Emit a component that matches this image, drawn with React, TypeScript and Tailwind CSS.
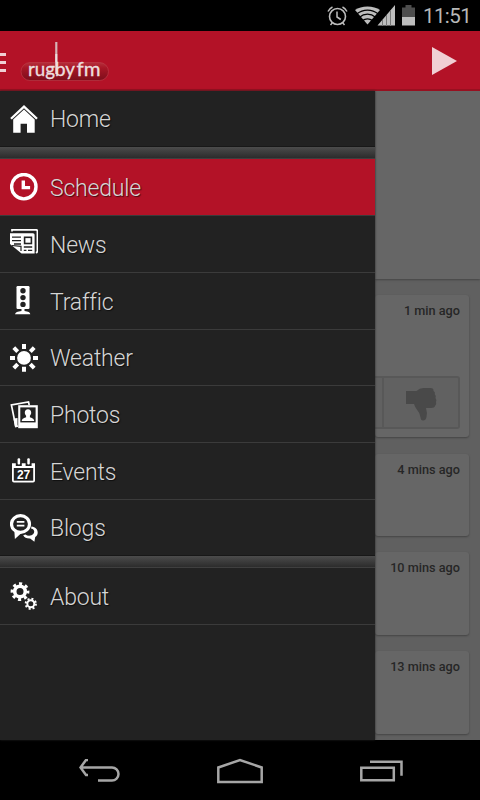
import type { ReactNode } from 'react'
import clsx from 'clsx'

const HomeIcon = () => (
  <svg width="28" height="28" viewBox="0 0 28 28" fill="#fff">
    <path d="M14 0 27.800 13l-1.600 1.600L14 3.200 1.800 14.600.2 13z" />
    <path d="M14 4.600 24.700 14.600V27.800H17V18.800h-6.400v9H3.200V14.600z" />
  </svg>
)

const ClockIcon = () => (
  <svg width="28" height="28" viewBox="0 0 28 28" fill="none" stroke="#fff">
    <circle cx="13.800" cy="13.700" r="12.200" strokeWidth="3.400" />
    <path d="M13.300 7.400v7.200h6.800" strokeWidth="3.400" />
  </svg>
)

const NewsIcon = () => (
  <svg className="-mt-[2px]" width="28" height="28" viewBox="0 0 28 28">
    <path d="M2 2.600V.8h24q1.400 0 1.400 1.400V22q0 1.400-1.600 1.800" fill="none" stroke="#fff" strokeWidth="1.700" />
    <path d="M0 4.200h23q1.600 0 1.600 1.600v18.800H11.500L0 15z" fill="#fff" />
    <path d="M2 8.200h9M2 11.600h9M4 15h7" stroke="#222" strokeWidth="1.300" />
    <path d="M2 16.500l9 .8v4.800" fill="none" stroke="#222" strokeWidth="1.200" />
    <rect x="14.600" y="8.300" width="6.800" height="6.200" fill="none" stroke="#222" strokeWidth="1.600" />
    <path d="M13.800 18h8.400M13.800 21.400h2.600M18 21.400h4.200" stroke="#222" strokeWidth="1.300" />
  </svg>
)

const TrafficIcon = () => (
  <svg className="-mt-px" width="28" height="29" viewBox="0 0 28 29">
    <rect x="6.500" y="0" width="13" height="23" rx="1.200" fill="#fff" />
    <path d="M11.500 22.500h3v2.400q5.600.5 5.800 3.300H5q.5-2.800 6.500-3.300z" fill="#fff" />
    <g fill="#222">
      <circle cx="13" cy="4.800" r="2.700" />
      <circle cx="13" cy="11.600" r="2.700" />
      <circle cx="13" cy="18.400" r="2.700" />
    </g>
  </svg>
)

const SunIcon = () => (
  <svg width="28" height="28" viewBox="0 0 28 28">
    <circle cx="14" cy="13.900" r="6.900" fill="#fff" />
    <path
      d="M14 0v5M14 22.800v5M0 13.900h5M23 13.900h5M3.800 3.700l3.900 3.900M20.300 20.200l3.900 3.900M24.200 3.700l-3.900 3.900M7.700 20.200l-3.900 3.900"
      stroke="#fff"
      strokeWidth="4"
    />
  </svg>
)

const PhotosIcon = () => (
  <svg className="mt-px" width="28" height="28" viewBox="0 0 28 28">
    <path d="M19.200 4 18.500 1 1.400 4 5.800 25.500 8 25" fill="none" stroke="#fff" strokeWidth="1.700" />
    <path d="M3.500 17.500 7.500 17v8.500l-2.500.6z" fill="#fff" />
    <rect x="8.200" y="4.200" width="19.600" height="23" fill="#fff" />
    <rect x="10.300" y="6.400" width="15.300" height="15" fill="#222" />
    <path
      d="M18 8.300c2 0 3.200 1.300 3.200 3.200 0 1.700-.8 2.600-1.300 3.300v1.400c1.600.9 4.200 1 4.300 3.800H11.800c.1-2.800 2.700-2.900 4.300-3.800v-1.400c-.5-.7-1.300-1.600-1.300-3.300 0-1.900 1.200-3.200 3.200-3.200z"
      fill="#fff"
    />
  </svg>
)

const CalendarIcon = () => (
  <svg width="28" height="28" viewBox="0 0 28 28">
    <path d="M2 6.200h3.800v2.800h6V6.200h3.800v2.800h6V6.200H25V23.500q0 2-2 2H4q-2 0-2-2z" fill="#fff" />
    <rect x="7.600" y="1.200" width="2.500" height="6.200" rx="1" fill="#fff" />
    <rect x="17.300" y="1.200" width="2.500" height="6.200" rx="1" fill="#fff" />
    <rect x="3.800" y="11" width="19.400" height="12.700" fill="#222" />
    <text x="13.600" y="21.800" textAnchor="middle" fontSize="12" fontWeight="700" fontFamily="Liberation Sans, sans-serif" fill="#fff">
      27
    </text>
  </svg>
)

const ChatIcon = () => (
  <svg width="28" height="28" viewBox="0 0 28 28">
    <path
      d="M21.500 12.500c3.800.4 6.200 2.900 6.200 5.900 0 2-.9 3.600-2.500 4.700l-.8 4.700-4.300-3.200c-3.300.2-5.700-.9-6.900-3.300l2.300-.7c1.600 1.300 4 1.500 6 .7 2.500-1 3.300-3.300 2.300-5-.6-1-1.500-1.500-2.800-1.700z"
      fill="#fff"
    />
    <path d="M4.300 16.500 4.900 25l6.600-6z" fill="#fff" />
    <ellipse cx="10.500" cy="10" rx="9" ry="8.400" fill="#222" stroke="#fff" strokeWidth="3.200" />
    <path d="M6.800 7.800h7.600M6.800 11.600h7.600" stroke="#fff" strokeWidth="1.700" />
  </svg>
)

const GearsIcon = () => (
  <svg width="28" height="28" viewBox="0 0 28 28" fill="none" stroke="#fff">
    <circle cx="10" cy="9.600" r="5.300" strokeWidth="3.600" />
    <circle cx="10" cy="9.600" r="7.900" strokeWidth="3" strokeDasharray="3.100" strokeDashoffset="1.200" />
    <circle cx="20.800" cy="21.800" r="3.500" strokeWidth="2" />
    <circle cx="20.800" cy="21.800" r="5.100" strokeWidth="2" strokeDasharray="2.003" />
  </svg>
)

const Logo = () => (
  <svg className="mt-[2px] ml-[14px]" width="90" height="60" viewBox="0 0 90 60">
    <defs>
      <linearGradient id="pill" x1="0" y1="0" x2="0" y2="1">
        <stop offset="0" stopColor="#b5303c" />
        <stop offset="0.3" stopColor="#a81626" />
        <stop offset="1" stopColor="#7c0e1b" />
      </linearGradient>
    </defs>
    <rect x="1" y="31.500" width="87.500" height="18" rx="9" fill="url(#pill)" stroke="#bd3f4b" strokeWidth="0.600" />
    <path d="M36.300 11v20" stroke="#d6b4b6" strokeWidth="2.200" />
    <path d="M36.300 23v20" stroke="#ecdede" strokeWidth="2" />
    <g fill="#ecdede" stroke="#ecdede" strokeWidth="0.350" fontFamily="Lato, sans-serif" fontSize="19.500">
      <text x="8" y="45" textLength="47" lengthAdjust="spacingAndGlyphs">rugby</text>
      <text x="56.500" y="45" textLength="24" lengthAdjust="spacingAndGlyphs">fm</text>
    </g>
  </svg>
)

function StatusBar() {
  return (
    <div className="flex h-[31px] items-center bg-black pl-[327px]">
      <svg width="22" height="22" viewBox="0 0 22 22" fill="none" stroke="#bdbdbd">
        <circle cx="10.500" cy="11.500" r="8" strokeWidth="1.600" />
        <path d="M10 6.500v5.500l3.800 2.500" strokeWidth="1.500" />
        <path d="M1 6.500Q2.500 3.500 5.500 2M20 6.500Q18.500 3.500 15.500 2M5.500 17.500l-2 2.500M15.500 17.500l2 2.500" strokeWidth="1.500" />
      </svg>
      <svg className="ml-[6px]" width="41" height="21" viewBox="0 0 41 21">
        <path d="M12.500 19.500 0 5C6 .2 19 .2 25 5z" fill="#bdbdbd" />
        <path d="M2 8.800C8 3.800 17 3.800 23 8.800M4.500 12.200c4.800-4 11.200-4 16 0M7.500 15.500c2.800-2.300 7.200-2.300 10 0" fill="none" stroke="#000" strokeWidth="1.300" />
        <path d="M40 0v20.500H22.500z" fill="#bdbdbd" />
        <path d="M27.500 15v6M31.500 10v11M35.500 5.500V21" stroke="#777" strokeWidth="1" />
      </svg>
      <svg className="ml-[6px]" width="13" height="21" viewBox="0 0 13 21">
        <path d="M0 2.500h3.500V0h6v2.500H13V12H0z" fill="#4d4d4d" />
        <path d="M0 12h13v8.500H0z" fill="#bdbdbd" />
      </svg>
      <span className="mt-[2px] ml-[8px] text-[20.5px] leading-[31px] tracking-[-0.6px] text-[#b8b8b8]">11:51</span>
    </div>
  )
}

type ItemProps = { icon: ReactNode; label: string; className: string; active?: boolean }

function MenuItem({ icon, label, className, active }: ItemProps) {
  return (
    <li
      className={clsx(
        'flex items-center border-b border-[#3b3b3b] pl-[10px] text-[23px] font-light tracking-[-0.2px] text-[#d6d6d6] [text-shadow:1px_1px_1px_rgba(0,0,0,0.6)]',
        active && 'bg-[#b31227]',
        className,
      )}
    >
      <span className="flex w-[40px] shrink-0">{icon}</span>
      <span className="pt-[4px]">{label}</span>
    </li>
  )
}

const Divider = ({ className }: { className: string }) => (
  <li className={clsx('border-b border-[#3f3f3f] bg-linear-to-b from-[#4c4c4c] to-[#2c2c2c]', className)} />
)

function Card({ time, className, children }: { time: string; className: string; children?: ReactNode }) {
  return (
    <div className={clsx('mr-[11px] rounded-[3px] bg-[#666] pr-[9px] shadow-[0_1px_2px_#444]', className)}>
      <p className="pt-[8px] text-right text-[12.7px] leading-[16px] font-medium text-[#262626]">{time}</p>
      {children}
    </div>
  )
}

export default function App() {
  return (
    <div className="flex h-[800px] w-[480px] flex-col overflow-hidden bg-black font-['Roboto',sans-serif]">
      <StatusBar />

      {/* Action bar */}
      <header className="flex h-[60px] items-center border-b-2 border-[#981020] bg-[#b31227]">
        <div className="mt-[4px] flex w-[6px] flex-col gap-[5px]">
          <span className="h-[3px] bg-[#f0cfd4]" />
          <span className="h-[3px] bg-[#f0cfd4]" />
          <span className="h-[3px] bg-[#f0cfd4]" />
        </div>
        <Logo />
        <svg className="mt-[2px] mr-[23px] ml-auto" width="25" height="28" viewBox="0 0 25 28">
          <path d="M0 0 25 14 0 28z" fill="#f0cfd4" />
        </svg>
      </header>

      <div className="flex h-[649px]">
        <nav className="relative z-10 w-[375px] shrink-0 bg-[#222] shadow-[0_0_2px_#222]">
          <ul>
            <MenuItem icon={<HomeIcon />} label="Home" className="h-[56px] border-b-[#181818]" />
            <Divider className="h-[12px]" />
            <MenuItem icon={<ClockIcon />} label="Schedule" className="h-[57px]" active />
            <MenuItem icon={<NewsIcon />} label="News" className="h-[57px]" />
            <MenuItem icon={<TrafficIcon />} label="Traffic" className="h-[57px]" />
            <MenuItem icon={<SunIcon />} label="Weather" className="h-[56px]" />
            <MenuItem icon={<PhotosIcon />} label="Photos" className="h-[57px]" />
            <MenuItem icon={<CalendarIcon />} label="Events" className="h-[57px]" />
            <MenuItem icon={<ChatIcon />} label="Blogs" className="h-[56px] border-b-[#181818]" />
            <Divider className="h-[12px]" />
            <MenuItem icon={<GearsIcon />} label="About" className="h-[57px]" />
          </ul>
        </nav>

        {/* Dimmed feed behind the drawer */}
        <main className="flex-1 overflow-hidden bg-[#606060]">
          <div className="h-[188px] bg-[#666] shadow-[0_1px_2px_#444]" />
          <Card time="1 min ago" className="mt-[16px] h-[142px]">
            <div className="mt-[57px] flex h-[53px] rounded-r-[3px] border-2 border-l-0 border-[#585858] bg-[#616161]">
              <div className="w-[9px] border-r-2 border-[#585858]" />
              <svg className="mt-[10px] ml-[22px]" width="32" height="34" viewBox="0 0 32 34" fill="#494949">
                <path d="M0 3h10.500q3-3 7-3h7q3.300.2 3 3 2 1 1.300 3.300Q30.500 8 29.500 10q1.500 2 .5 4 .8 2.300-.8 3.800Q28.500 20 25 20h-5q1.500 5 .5 9-.7 3.500-3.500 3.500-2.200 0-2.500-3.200Q14 25 10.500 21 9 19 8 16H0z" />
              </svg>
            </div>
          </Card>
          <Card time="4 mins ago" className="mt-[17px] h-[82px]" />
          <Card time="10 mins ago" className="mt-[16px] h-[83px]" />
          <Card time="13 mins ago" className="mt-[16px] h-[83px]" />
        </main>
      </div>

      {/* Navigation bar */}
      <div className="flex h-[60px] items-center pt-[2px] pl-[79px]">
        <svg width="43" height="24" viewBox="0 0 43 24" fill="none" stroke="#a6a6a6" strokeWidth="2.500">
          <path d="M2 8.500h31a6.500 6.500 0 0 1 0 13H19M9 1H7L1.500 8.500 7 16h2" />
        </svg>
        <svg className="ml-[95px]" width="46" height="26" viewBox="0 0 46 26" fill="none" stroke="#a6a6a6" strokeWidth="2.500">
          <path d="M1.300 9.500 23 2 44.700 9.500V24H1.300z" />
        </svg>
        <svg className="ml-[97px]" width="43" height="24" viewBox="0 0 43 24" fill="none" stroke="#a6a6a6" strokeWidth="2.500">
          <path d="M1.300 8.800h32.500v12.500H1.300zM10 2.800h31.500v14" />
        </svg>
      </div>
    </div>
  )
}
